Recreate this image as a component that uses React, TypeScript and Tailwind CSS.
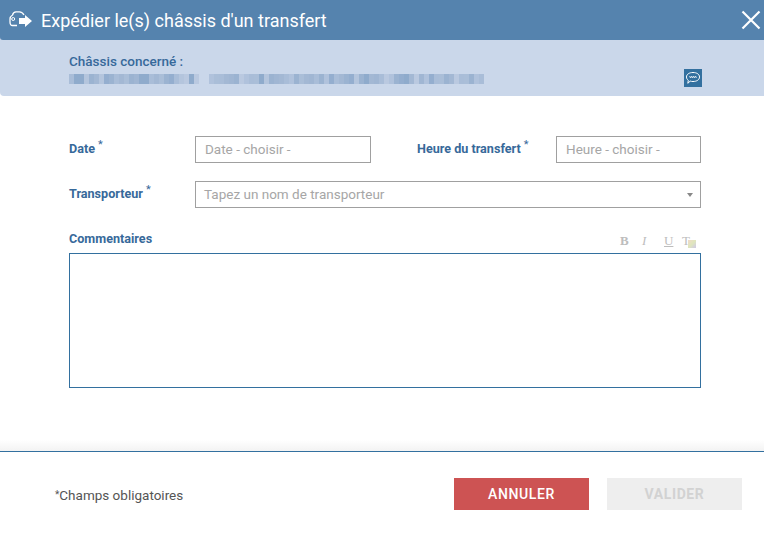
import React from 'react';

// pixelated (anonymised) text row
const tones = ['#8fabcc', '#b4c5dd', '#a9bdd8', '#9bb3d1', '#b0c2dc', '#a3b8d4', '#94aecf', '#aabed8', '#a0b6d3', '#bac9e0', '#98b1d0'];
const blurGroups: number[][] = [
  [2, 0, 0, 1, 3, 5, 1, 6, 3, 2, 5, 7, 3, 8, 0, 0, 2, 5, 7, 3, 6, 2, 1, 9, 0, 9],
  [4, 7, 2, 5, 8, 3, 9, 4, 2, 7, 0, 1, 3, 8, 5, 2, 4, 3, 7, 5, 8, 2, 3, 4, 6, 2, 5, 3, 6, 1, 3, 0, 5, 8, 2, 9, 4, 3, 6, 0, 5, 9, 8, 4, 6, 2, 7, 3, 5, 9, 2, 7, 3, 4, 2],
];

const Req: React.FC = () => <sup className="ml-[3px] text-[11px] font-normal relative top-[-5px]">*</sup>;

const TransferIcon: React.FC = () => (
  <svg width="24" height="20" viewBox="0 0 24 20" fill="none">
    <path d="M15 5 C14 3 12.5 1.8 10.5 1.8 H7 C5 1.8 4 3 3.5 5 C2 6 1 7 1 9 V12 C1 14.5 2 15.5 3.5 15.5 H8" stroke="white" strokeWidth="1.3" />
    <circle cx="4.2" cy="9" r="1.5" stroke="white" strokeWidth="1" />
    <path d="M10 8 H16 V5 L23 11 L16 17 V14 H10 Z" fill="white" />
  </svg>
);

const App: React.FC = () => {
  return (
    <div className="w-[764px] h-[533px] bg-white overflow-hidden flex flex-col font-['Roboto',sans-serif]">
      <div className="bg-[#cad7ea] rounded-bl-[4px] shrink-0">
        {/* Header */}
        <div className="h-10 bg-[#5583ae] rounded-bl-[3px] flex items-center pl-[9px] pr-[3px]">
          <TransferIcon />
          <h1 className="ml-2 text-[18px] text-white font-normal">Expédier le(s) châssis d'un transfert</h1>
          <svg className="ml-auto" width="20" height="20" viewBox="0 0 20 20">
            <path d="M1.5 1.5 L18.5 18.5 M18.5 1.5 L1.5 18.5" stroke="white" strokeWidth="2.2" />
          </svg>
        </div>

        {/* Chassis band */}
        <div className="h-14 pl-[69px] pr-[62px] pt-[13px]">
          <div className="text-[13.5px] leading-[16px] font-medium text-[#37699a]">Châssis concerné :</div>
          <div className="flex items-start justify-between">
            <div className="flex h-2.5 mt-[5px] gap-[10px]">
              {blurGroups.map((group, g) => (
                <div key={g} className="flex h-full">
                  {group.map((t, i) => (
                    <div key={i} className="h-full w-[5px]" style={{ backgroundColor: tones[t] }} />
                  ))}
                </div>
              ))}
            </div>
            <div className="w-[18px] h-[18px] bg-[#33709f] flex items-center justify-center">
              <svg width="16" height="14" viewBox="0 0 16 14" fill="none">
                <path d="M8 1.5 C11.8 1.5 14.5 3.3 14.5 6 C14.5 8.7 11.8 10.5 8 10.5 C7 10.5 6 10.4 5.2 10.1 L2.8 12.3 L3.3 9.3 C2 8.4 1.5 7.3 1.5 6 C1.5 3.3 4.2 1.5 8 1.5 Z" stroke="white" strokeWidth="1" />
                <path d="M4.5 5 L5.5 7 L6.5 5 L7.5 7 L8.5 5 L9.5 7 L10.5 5 L11.5 7" stroke="white" strokeWidth="0.7" />
              </svg>
            </div>
          </div>
        </div>
      </div>

      {/* Form */}
      <div className="pl-[69px] pr-[63px] pt-10 flex-1">
        <div className="flex items-center h-[27px]">
          <label className="w-[126px] text-[12.6px] font-bold text-[#37699a]">Date<Req /></label>
          <div className="w-[176px] h-[27px] border border-[#a0a0a0] text-[13.5px] text-[#a6a6a6] pl-[9px] flex items-center">Date - choisir -</div>
          <label className="ml-[46px] w-[139px] text-[12.6px] font-bold text-[#37699a]">Heure du transfert<Req /></label>
          <div className="w-[145px] h-[27px] border border-[#a0a0a0] text-[13.5px] text-[#a6a6a6] pl-[9px] flex items-center">Heure - choisir -</div>
        </div>
        <div className="flex items-center h-[27px] mt-[18px]">
          <label className="w-[126px] text-[12.6px] font-bold text-[#37699a]">Transporteur<Req /></label>
          <div className="flex-1 h-[27px] border border-[#a0a0a0] text-[13.5px] text-[#a6a6a6] pl-2 pr-[7px] flex items-center justify-between">
            <span>Tapez un nom de transporteur</span>
            <span className="w-0 h-0 border-x-[3px] border-x-transparent border-t-[4px] border-t-[#888888]" />
          </div>
        </div>
        <div className="flex items-end justify-between h-[45px]">
          <label className="text-[12.6px] font-bold text-[#37699a] pb-1">Commentaires</label>
          <div className="flex items-center gap-[13px] pr-[5px] pb-[6px] text-[13px] leading-none text-[#bdbdbd] font-['Liberation_Serif',serif]">
            <span className="w-[9px] font-bold">B</span>
            <span className="w-[9px] italic">I</span>
            <span className="w-[9px] underline">U</span>
            <span className="relative w-[14px] -ml-1">T
              <span className="absolute left-[6px] top-[6px] w-2 h-2 bg-[linear-gradient(135deg,#f3d9c9,#dfe6bd,#cfc8ea)]" />
            </span>
          </div>
        </div>
        <div className="h-[135px] border border-[#33709f]" />
      </div>

      {/* Footer */}
      <div className="h-[11px] bg-gradient-to-b from-white to-[#f3f3f3] shrink-0" />
      <div className="h-[82px] border-t border-[#33709f] pl-[55px] pr-[22px] pt-[26px] flex items-start justify-between shrink-0">
        <div className="text-[13.5px] text-[#555555] pt-[9px] leading-[16px]"><span className="relative top-[-2px] text-[10px]">*</span>Champs obligatoires</div>
        <div className="flex gap-[18px]">
          <button className="w-[135px] h-8 bg-[#cd5353] text-white text-sm font-medium tracking-[0.6px]">ANNULER</button>
          <button className="w-[135px] h-8 bg-[#eeeeee] text-[#d2d2d2] text-sm font-bold tracking-[0.6px]">VALIDER</button>
        </div>
      </div>
    </div>
  );
};

export default App;
